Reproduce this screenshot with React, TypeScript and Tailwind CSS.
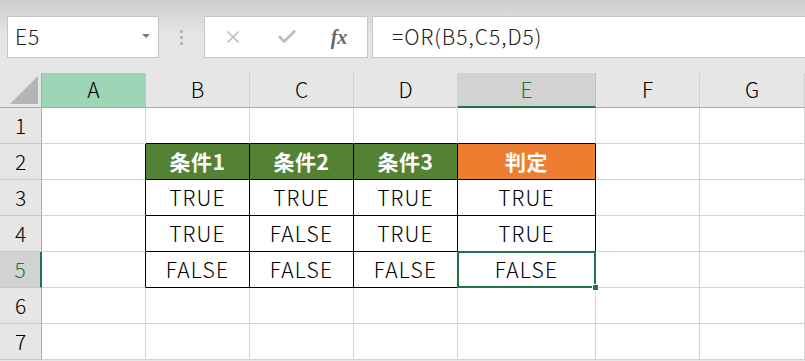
import { X, Check } from 'lucide-react';

const COLS = ['A', 'B', 'C', 'D', 'E', 'F', 'G'];
const ROWS = [1, 2, 3, 4, 5, 6, 7];

// B2:E5 のデータ
const DATA: Record<number, string[]> = {
  2: ['条件1', '条件2', '条件3', '判定'],
  3: ['TRUE', 'TRUE', 'TRUE', 'TRUE'],
  4: ['TRUE', 'FALSE', 'TRUE', 'TRUE'],
  5: ['FALSE', 'FALSE', 'FALSE', 'FALSE'],
};

const inTable = (c: number, r: number) => c >= 1 && c <= 4 && r >= 2 && r <= 5;

function Cell({ c, r }: { c: number; r: number }) {
  const table = inTable(c, r);
  const rightBlack = table || (c === 0 && r >= 2 && r <= 5);
  const bottomBlack = table || (r === 1 && c >= 1 && c <= 4);
  const text = table ? DATA[r][c - 1] : '';
  const isHead = r === 2 && table;
  const bg = isHead ? (c === 4 ? 'bg-[#ed7d31]' : 'bg-[#548235]') : 'bg-white';
  const selected = c === 4 && r === 5;

  return (
    <div
      className={`relative h-[36px] flex items-center justify-center border-r border-b ${
        rightBlack ? 'border-r-black' : 'border-r-[#d4d4d4]'
      } ${bottomBlack ? 'border-b-black' : 'border-b-[#d4d4d4]'} ${bg} ${
        isHead
          ? 'text-white font-bold text-[21px] tracking-[0.5px]'
          : 'text-black text-[21px] font-light tracking-[1.2px]'
      }`}
    >
      {text}
      {selected && (
        <>
          <div className="absolute z-10 -left-[1px] -top-[1px] -right-[1px] -bottom-[1px] border-2 border-[#217346]" />
          <div className="absolute z-20 -right-[4px] -bottom-[4px] w-[7px] h-[7px] bg-[#217346] border border-white" />
        </>
      )}
    </div>
  );
}

export default function App() {
  return (
    <div
      className="w-[805px] h-[361px] overflow-hidden bg-[#e6e6e6]"
      style={{ fontFamily: '"Noto Sans CJK JP", "Noto Sans", sans-serif' }}
    >
      {/* 数式バー */}
      <div className="h-[73px] bg-gradient-to-b from-[#cfcfcf] via-[#e6e6e6] to-[#e6e6e6] flex items-start pt-[16px] pl-[7px]">
        <div className="w-[152px] h-[42px] bg-white border border-[#c6c6c6] flex items-center justify-between pl-[7px] pr-[8px]">
          <span className="text-[21px] font-light text-[#222] tracking-[1px]">E5</span>
          <span className="w-0 h-0 border-l-[4px] border-r-[4px] border-t-[4px] border-l-transparent border-r-transparent border-t-[#777] mb-[2px]" />
        </div>
        <div className="w-[45px] h-[42px] flex flex-col items-center justify-center gap-[3px]">
          <span className="w-[3px] h-[3px] bg-[#b5b5b5]" />
          <span className="w-[3px] h-[3px] bg-[#b5b5b5]" />
          <span className="w-[3px] h-[3px] bg-[#b5b5b5]" />
        </div>
        <div className="w-[164px] h-[42px] bg-white border border-[#c6c6c6] flex items-center">
          <div className="w-[56px] flex justify-center">
            <X className="w-[20px] h-[20px] text-[#bdbdbd]" strokeWidth={2} />
          </div>
          <div className="w-[52px] flex justify-center">
            <Check className="w-[22px] h-[22px] text-[#bdbdbd]" strokeWidth={3} />
          </div>
          <div className="w-[52px] flex justify-center">
            <span
              className="italic font-bold text-[20px] text-[#666]"
              style={{ fontFamily: '"Liberation Serif", serif' }}
            >
              fx
            </span>
          </div>
        </div>
        <div className="ml-[4px] flex-1 h-[42px] bg-white border-y border-l border-[#c6c6c6] flex items-center pl-[19px]">
          <span className="text-[21px] font-light text-[#222] tracking-[1px]">=OR(B5,C5,D5)</span>
        </div>
      </div>

      {/* シート */}
      <div className="grid grid-cols-[42px_104px_104px_104px_104px_138px_104px_105px] bg-white">
        {/* 左上の角 */}
        <div className="h-[35px] bg-[#e6e6e6] border-r border-b border-[#ababab] flex items-end justify-end p-[3px]">
          <div
            className="w-0 h-0"
            style={{ borderBottom: '28px solid #b4b4b4', borderLeft: '28px solid transparent' }}
          />
        </div>
        {COLS.map((k) => (
          <div
            key={k}
            className={`h-[35px] flex items-center justify-center text-[21px] font-light border-r border-b ${
              k === 'A'
                ? 'bg-[#9fd5b7] text-black border-r-[#c0c0c0] border-b-[#ababab]'
                : k === 'E'
                  ? 'bg-[#d2d2d2] text-[#217346] border-r-[#c0c0c0] border-b-2 border-b-[#217346]'
                  : 'bg-[#e6e6e6] text-black border-r-[#d0d0d0] border-b-[#ababab]'
            }`}
          >
            {k}
          </div>
        ))}

        {ROWS.map((r) => (
          <div key={r} className="contents">
            <div
              className={`h-[36px] flex items-center justify-center text-[21px] font-light border-b border-b-[#c8c8c8] ${
                r === 5
                  ? 'bg-[#d2d2d2] text-[#217346] border-r-2 border-r-[#217346]'
                  : 'bg-[#e6e6e6] text-black border-r border-r-[#ababab]'
              }`}
            >
              {r}
            </div>
            {COLS.map((_, c) => (
              <Cell key={c} c={c} r={r} />
            ))}
          </div>
        ))}
      </div>
    </div>
  );
}
